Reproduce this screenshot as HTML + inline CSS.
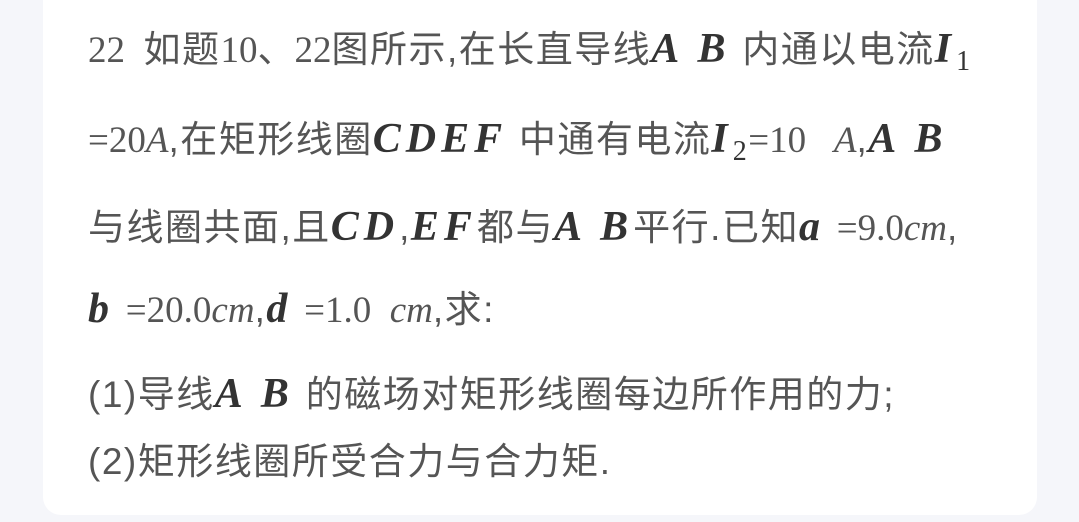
<!DOCTYPE html>
<html><head><meta charset="utf-8"><style>
body{margin:0;width:1079px;height:522px;background:#f5f6fa;overflow:hidden;position:relative;font-family:"Liberation Sans","Noto Sans CJK SC",sans-serif;color:#555;}
.card{position:absolute;left:43px;top:-20px;width:994px;height:535px;background:#fff;border-radius:18px;}
.l{position:absolute;left:88px;font-size:37px;letter-spacing:1.5px;white-space:nowrap;line-height:44px;}
.s{font-family:"Liberation Serif","Noto Sans CJK SC",serif;font-size:37px;letter-spacing:0;}
.m{font-family:"Liberation Serif",serif;font-style:italic;font-weight:bold;font-size:42px;color:#333;letter-spacing:5px;}
.mi{font-family:"Liberation Serif",serif;font-style:italic;}
sub{font-size:28px;font-family:"Liberation Serif",serif;font-style:normal;font-weight:normal;vertical-align:-8px;color:#333}
</style></head><body>
<div class="card"></div>
<div class="l" style="top:27px"><span class="s">22&nbsp; </span>如题<span class="s">10、22</span>图所示,在长直导线<span class="m">A B</span> 内通以电流<span class="m">I</span><sub>1</sub></div>
<div class="l" style="top:117px"><span class="s">=20<span class="mi">A</span></span>,在矩形线圈<span class="m">CDEF</span> 中通有电流<span class="m">I</span><sub>2</sub><span class="s">=10&nbsp;&nbsp; <span class="mi">A</span></span>,<span class="m">A B</span></div>
<div class="l" style="top:205px">与线圈共面,且<span class="m">CD</span>,<span class="m">EF</span>都与<span class="m">A B</span>平行.已知<span class="m">a</span> <span class="s">=9.0<span class="mi">cm</span></span>,</div>
<div class="l" style="top:287px"><span class="m">b</span> <span class="s">=20.0<span class="mi">cm</span></span>,<span class="m">d</span> <span class="s">=1.0&nbsp; <span class="mi">cm</span></span>,求:</div>
<div class="l" style="top:372px">(1)导线<span class="m">A B</span> 的磁场对矩形线圈每边所作用的力;</div>
<div class="l" style="top:440px">(2)矩形线圈所受合力与合力矩.</div>
</body></html>
